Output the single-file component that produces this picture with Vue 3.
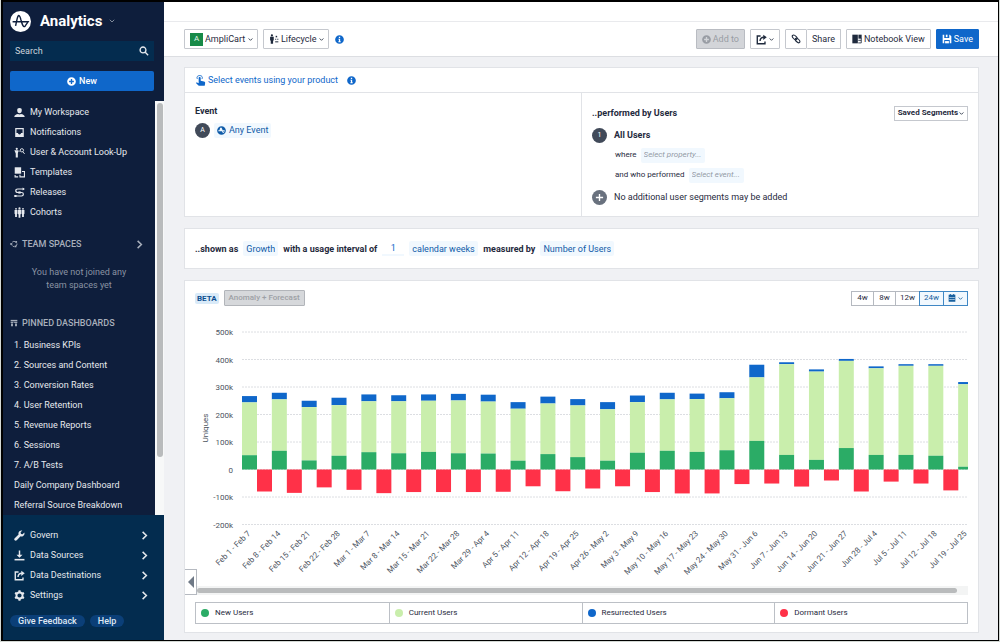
<script setup>
import { h } from 'vue'

const icons = {
  user: { f: ['M6 1a2.5 2.5 0 0 1 2.5 2.7C8.5 5.400 7.500 6.800 6 6.800S3.500 5.400 3.500 3.700A2.500 2.500 0 0 1 6 1z', 'M.3 11c0-2.400 2-2.900 4.100-3.400.9.6 2.300.6 3.200 0 2.100.5 4.100 1 4.100 3.400z'] },
  inbox: { s: ['M2 1.800h8v8.400H2z'], f: ['M2 6.600h2.300c.2 1 .8 1.500 1.700 1.500s1.500-.5 1.700-1.500H10V11H2z'], w: 1.3 },
  lookup: { f: ['M3 .8a1.200 1.200 0 1 1 0 2.400 1.200 1.200 0 0 1 0-2.400z', 'M.4 3.600h4.600L4.200 7.200v4.300H1.900V7.200z'], s: ['M5.300 5.200 6.500 3.900', 'M8.600 1.800a1.800 1.800 0 1 1 0 3.600 1.800 1.800 0 0 1 0-3.600z', 'M9.700 5.200l1.900 2.400'], w: 1 },
  templates: { f: ['M.8.300h7v7H.8z'], s: ['M8.700 4.900H11.400v5.900H6.500V8.400', 'M1.200 8.600v2.200h3.300'], w: 1.200 },
  releases: { s: ['M11 2.200H4.200C1.200 2.200 1.200 6 4.200 6h4c2.700 0 2.700 3.800 0 3.800H.6'], f: ['M9.400.6 11.800 2.200 9.400 3.800z', 'M4.700 4.800h2.600v2.400H4.700z', 'M.4 8.700h2.400v2.200H.4z'], w: 1.300 },
  cohorts: { f: ['M6 .3a1.200 1.200 0 1 1 0 2.400A1.200 1.200 0 0 1 6 .3z', 'M4.400 3h3.200v4.600l-.6.5v3.700H5V8.100l-.6-.5z', 'M2.200 1a1 1 0 1 1 0 2 1 1 0 0 1 0-2z', 'M.6 3.300h3.200v4l-.6.5V11h-2V7.800l-.6-.5z', 'M9.800 1a1 1 0 1 1 0 2 1 1 0 0 1 0-2z', 'M8.200 3.300h3.200v4l-.6.5V11h-2V7.800l-.6-.5z'] },
  team: { s: ['M3.300 3.300A4 4 0 0 1 8.500 2.800', 'M10.400 5.200a4 4 0 0 1-1.600 4', 'M6.800 10a4 4 0 0 1-3.800-2'], f: ['M.4 4.700h3v2.600h-3z', 'M8 1.600h2.600v2.600H8z', 'M7 8.300h2.600v2.600H7z'], w: 1.300 },
  board: { f: ['M1 1.300h10v2.200H1z', 'M1 4.300h4.200v1.600H1z', 'M6.200 4.300H11v1.600H6.200z', 'M1.600 6.800h2.800v3.900H1.600z', 'M7.600 6.800h2.800v3.900H7.600z'] },
  wrench: { f: ['M11.300 2.800 9.400 4.700 7.600 4.300 7.200 2.500 9.100.6C7.500.1 5.600.9 5 2.600c-.3.8-.2 1.500 0 2.200L.8 8.900c-.7.7-.7 1.600-.1 2.300.7.6 1.600.6 2.300-.1l4.200-4.200c.7.300 1.600.3 2.400-.1 1.500-.7 2.200-2.400 1.700-4z'] },
  download: { f: ['M5.200.5h1.600v4.600h2.500L6 8.500 2.700 5.100h2.500z', 'M.6 9.700h10.800v1.700H.6z'] },
  share: { s: ['M5 2.200H1.400v8.500h8.400V8.200', 'M4.400 7.600c.1-2.600 1.400-3.900 4.200-4'], f: ['M7.900.8 11.700 3.600 7.900 6.500z'], w: 1.500 },
  gear: { s: ['M6 2.700a3.300 3.300 0 1 1 0 6.600 3.300 3.300 0 0 1 0-6.600z'], f: ['M4.900.4h2.200l.3 2.200H4.600z', 'M4.900 11.600h2.200l.3-2.200H4.600z', 'M.6 4.100 1.700 2.200l2.100.9-1.400 2.300z', 'M11.400 4.100 10.300 2.200l-2.100.9 1.400 2.300z', 'M.6 7.900l1.100 1.900 2.100-.9-1.400-2.300z', 'M11.400 7.900l-1.100 1.900-2.100-.9 1.400-2.300z'], w: 2 },
  search: { s: ['M4.800 1.200a3.500 3.500 0 1 1 0 7 3.500 3.500 0 0 1 0-7z', 'M7.500 7.500 11 11'], w: 1.600 },
  down: { s: ['M1.500 3.500 6 8l4.500-4.500'], w: 2 },
  right: { s: ['M3.500 1.200 8.500 6l-5 4.800'], w: 2 },
  plus: { f: ['M6 .2a5.800 5.800 0 1 0 0 11.600A5.800 5.800 0 0 0 6 .2zM5.100 2.800h1.800v2.300h2.300v1.800H6.900v2.300H5.100V6.900H2.800V5.100h2.300z'] },
  info: { f: ['M6 .2a5.800 5.800 0 1 0 0 11.600A5.800 5.800 0 0 0 6 .2zM5.100 2.300h1.800v1.600H5.100zM4.500 4.900h2.400v3.400h.7v1.200H4.500V8.300h.7V6.100h-.7z'] },
  tap: { f: ['M4 3.200c0-1.500 2.200-1.500 2.200 0v3l3.600.8c1 .2 1.400.8 1.300 1.700l-.5 3.100H4.100L1 8.600c.6-.8 1.700-.6 3 .3z'], s: ['M2.700 4.400C1.300 2.100 3 .6 5.100.6s3.800 1.500 2.400 3.800'], w: 1 },
  lifecycle: { f: ['M3.500.4a1.300 1.300 0 1 1 0 2.600 1.300 1.300 0 0 1 0-2.600z', 'M1.300 3.400h4.400v4.100l-.8.5v3.800H2.100V8l-.8-.5z', 'M8 2.200h1.800V4H8z', 'M7.400 5.800h1.300V7H7.400z', 'M9.900 5.800h1.300V7H9.900z', 'M7.400 8.800h3.800V10H7.400z'] },
  link: { s: ['M1.800 1.800C3.200.5 4.700 1.500 6.300 3.100s1.300 2.700.4 3.500-2.200.4-3.700-1.200S.8 2.800 1.800 1.800z', 'M5.500 5.400c1-.9 2.200-.5 3.800 1.200s1.900 2.600 1 3.500-2.200.5-3.800-1.100-1.900-2.700-1-3.600z'], w: 1.300 },
  notebook: { f: ['M.4.800h6.600v10.400H.4z', 'M7.700.8h3.900v4.800H7.700z'], s: ['M7.500 10.700h3.600V5', 'M7.500 7.600h3.600'], w: 1 },
  save: { f: ['M.8.800h1.900v4h6V.8h.6l1.900 1.900v8.500H9.300V7.300H2.700v3.900H.8z', 'M4.600.8h2v3h-2z', 'M3.700 8.500h4.600v2.700H3.700z'] },
  calendar: { f: ['M2.700 0h1.500v1.200h3.600V0h1.500v1.200H11V11.600H1V1.200h1.700zM2.300 4.500v1.600h1.600V4.500zM5.200 4.500v1.600h1.600V4.500zM8.100 4.500v1.600h1.600V4.500zM2.300 7.500v1.600h1.600V7.500zM5.200 7.500v1.600h1.600V7.500zM8.100 7.500v1.600h1.600V7.500z'] },
  event: { f: ['M6 .2a5.800 5.800 0 1 0 0 11.600A5.800 5.800 0 0 0 6 .2zM1.800 6.900V5.700h1.500c.6-2.700 1.200-3.600 2-3.600 1 0 1.500 1.300 2.100 3.600h2.800v1.200H7.700c.5 1.800.9 1.800 1.400.2l1 .3c-.9 2.700-2.400 2.600-3.500-.5z'] },
  logo: { s: ['M1 6.200h9.800L9 8.800C7.700 10.300 7 7.500 6.300 5 5.500 1.700 4.600 1.200 3.900 4.200L2.900 8.800'], w: .9 }
}

const Icon = (props) => {
  const i = icons[props.name]
  return h('svg', { viewBox: '0 0 12 12', width: props.size, height: props.size, 'aria-hidden': 'true' }, [
    ...(i.f || []).map((d) => h('path', { d, fill: 'currentColor', 'fill-rule': 'evenodd' })),
    ...(i.s || []).map((d) => h('path', { d, fill: 'none', stroke: 'currentColor', 'stroke-width': i.w }))
  ])
}
Icon.props = ['name', 'size']

const nav = [
  ['user', 'My Workspace'], ['inbox', 'Notifications'], ['lookup', 'User & Account Look-Up'],
  ['templates', 'Templates'], ['releases', 'Releases'], ['cohorts', 'Cohorts']
]
const boards = [
  '1. Business KPIs', '2. Sources and Content', '3. Conversion Rates', '4. User Retention',
  '5. Revenue Reports', '6. Sessions', '7. A/B Tests', 'Daily Company Dashboard', 'Referral Source Breakdown'
]
const admin = [['wrench', 'Govern'], ['download', 'Data Sources'], ['share', 'Data Destinations'], ['gear', 'Settings']]
const ranges = ['4w', '8w', '12w', '24w']
const legend = [['New Users', 'new-users'], ['Current Users', 'current'], ['Resurrected Users', 'resurrected'], ['Dormant Users', 'dormant']]

// label, top of new, top of current, top of resurrected, dormant (thousands)
const weeks = [
  ['Feb 1 - Feb 7', 52, 244, 267, 80], ['Feb 8 - Feb 14', 68, 255, 279, 85], ['Feb 15 - Feb 21', 33, 227, 250, 65],
  ['Feb 22 - Feb 28', 50, 234, 261, 74], ['Mar 1 - Mar 7', 63, 248, 273, 86], ['Mar 8 - Mar 14', 59, 248, 270, 82],
  ['Mar 15 - Mar 21', 64, 250, 273, 82], ['Mar 22 - Mar 28', 59, 251, 275, 82], ['Mar 29 - Apr 4', 58, 247, 272, 81],
  ['Apr 5 - Apr 11', 32, 221, 245, 61], ['Apr 12 - Apr 18', 56, 240, 265, 79], ['Apr 19 - Apr 25', 45, 233, 256, 69],
  ['Apr 26 - May 2', 32, 219, 245, 61], ['May 3 - May 9', 61, 245, 269, 82], ['May 10 - May 16', 68, 255, 279, 87],
  ['May 17 - May 23', 64, 256, 276, 87], ['May 24 - May 30', 70, 259, 281, 53], ['May 31 - Jun 6', 104, 335, 381, 51],
  ['Jun 7 - Jun 13', 53, 383, 390, 62], ['Jun 14 - Jun 20', 35, 356, 364, 40], ['Jun 21 - Jun 27', 78, 395, 402, 80],
  ['Jun 28 - Jul 4', 53, 368, 375, 44], ['Jul 5 - Jul 11', 53, 377, 383, 51], ['Jul 12 - Jul 18', 50, 377, 383, 76],
  ['Jul 19 - Jul 25', 10, 310, 318, 0]
]
const ticks = [500, 400, 300, 200, 100, 0, -100, -200]
const unit = 0.275
const zero = 149.5
const y = (v) => zero - v * unit
const bars = weeks.map(([label, n, c, r, d], i) => {
  const x = 47 + i * 29.84
  return { label, x, w: Math.min(15, 773 - x), n, c, r, d }
})
</script>

<template>
  <div class="frame">
    <aside class="side">
      <header class="brand">
        <span class="logo"><Icon name="logo" size="19" /></span>
        <strong>Analytics</strong>
        <Icon name="down" size="6" class="muted" />
      </header>
      <label class="search">
        <input type="text" placeholder="Search" aria-label="Search" />
        <Icon name="search" size="10" />
      </label>
      <button class="new"><Icon name="plus" size="9" />New</button>

      <div class="scroll">
        <div class="scroll-body">
          <nav class="links">
            <a v-for="[icon, text] in nav" :key="text" href="#"><Icon :name="icon" size="11" />{{ text }}</a>
          </nav>
          <h2 class="head team"><Icon name="team" size="8" />TEAM SPACES<Icon name="right" size="9" class="end" /></h2>
          <p class="empty">You have not joined any<br />team spaces yet</p>
          <h2 class="head"><Icon name="board" size="8" />PINNED DASHBOARDS</h2>
          <nav class="boards">
            <a v-for="b in boards" :key="b" href="#">{{ b }}</a>
          </nav>
        </div>
        <div class="rail"><div class="thumb"></div></div>
      </div>

      <footer class="admin">
        <nav class="links">
          <a v-for="[icon, text] in admin" :key="text" href="#">
            <Icon :name="icon" size="11" />{{ text }}<Icon name="right" size="9" class="end" />
          </a>
        </nav>
        <div class="pills"><button>Give Feedback</button><button>Help</button></div>
      </footer>
    </aside>

    <main class="main">
      <div class="strip"></div>
      <div class="toolbar">
        <label class="btn drop"><span class="tile">A</span>
          <select aria-label="Project"><option>AmpliCart</option></select><Icon name="down" size="5" />
        </label>
        <label class="btn drop"><Icon name="lifecycle" size="10" />
          <select aria-label="Chart type"><option>Lifecycle</option></select><Icon name="down" size="5" />
        </label>
        <Icon name="info" size="9" class="blue info" />
        <span class="space"></span>
        <button class="btn off" disabled><Icon name="plus" size="9" />Add to</button>
        <button class="btn" aria-label="Export"><Icon name="share" size="11" /><Icon name="down" size="5" /></button>
        <div class="pair">
          <button class="btn" aria-label="Copy link"><Icon name="link" size="10" /></button>
          <button class="btn">Share</button>
        </div>
        <button class="btn"><Icon name="notebook" size="10" />Notebook View</button>
        <button class="btn save"><Icon name="save" size="10" />Save</button>
      </div>

      <div class="content">
        <section class="card">
          <div class="pick">
            <a href="#"><Icon name="tap" size="11" />Select events using your product</a>
            <Icon name="info" size="9" class="blue" />
          </div>
          <div class="cols">
            <div class="col">
              <h3>Event</h3>
              <div class="line">
                <span class="dot">A</span>
                <button class="chip"><Icon name="event" size="9" />Any Event</button>
              </div>
            </div>
            <div class="col right">
              <div class="line by">
                <h3>..performed by Users</h3>
                <button class="saved">Saved Segments<Icon name="down" size="5" /></button>
              </div>
              <div class="line all"><span class="dot">1</span><b>All Users</b></div>
              <div class="line sub">where <select class="chip hint" aria-label="Property"><option>Select property...</option></select></div>
              <div class="line sub">and who performed <select class="chip hint" aria-label="Event"><option>Select event...</option></select></div>
              <div class="line more">
                <span class="dot grey"><svg viewBox="0 0 10 10" width="9" height="9"><path d="M5 1v8M1 5h8" stroke="#fff" stroke-width="1.500" /></svg></span>
                No additional user segments may be added
              </div>
            </div>
          </div>
        </section>

        <section class="card measure">
          <b>..shown as</b>
          <select class="chip" aria-label="Shown as"><option>Growth</option></select>
          <b>with a usage interval of</b>
          <input class="count" value="1" aria-label="Interval" />
          <select class="chip" aria-label="Interval unit"><option>calendar weeks</option></select>
          <b>measured by</b>
          <select class="chip" aria-label="Measured by"><option>Number of Users</option></select>
        </section>

        <section class="card chart">
          <div class="line">
            <span class="beta">BETA</span>
            <button class="anomaly" disabled>Anomaly + Forecast</button>
            <span class="space"></span>
            <div class="ranges">
              <button v-for="r in ranges" :key="r" :class="{ on: r === '24w' }">{{ r }}</button>
              <button class="on" aria-label="Pick dates"><Icon name="calendar" size="8" /><Icon name="down" size="5" /></button>
            </div>
          </div>
          <svg class="plot" viewBox="0 0 773 266" role="img" aria-label="Uniques per week">
            <g v-for="t in ticks" :key="t">
              <line x1="47" x2="773" :y1="y(t)" :y2="y(t)" class="grid" />
              <text x="38" :y="y(t) + 3" text-anchor="end">{{ t ? t + 'k' : '0' }}</text>
            </g>
            <text transform="translate(13 108) rotate(-90)" text-anchor="middle">Uniques</text>
            <g v-for="b in bars" :key="b.label">
              <rect class="resurrected" :x="b.x" :y="y(b.r)" :width="b.w" :height="(b.r - b.c) * unit" />
              <rect class="current" :x="b.x" :y="y(b.c)" :width="b.w" :height="(b.c - b.n) * unit" />
              <rect class="new-users" :x="b.x" :y="y(b.n)" :width="b.w" :height="b.n * unit" />
              <rect v-if="b.d" class="dormant" :x="b.x + 15" :y="zero" width="15" :height="b.d * unit" />
              <text :transform="`translate(${b.x + 9} 214) rotate(-45)`" text-anchor="end">{{ b.label }}</text>
            </g>
          </svg>
          <div class="hbar"><div></div></div>
          <ul class="legend">
            <li v-for="[text, kind] in legend" :key="kind"><i :class="kind"></i>{{ text }}</li>
          </ul>
          <button class="fold" aria-label="Collapse"><svg viewBox="0 0 6 12" width="6" height="12"><path d="M6 0v12L0 6z" fill="#6f7986" /></svg></button>
        </section>
      </div>
    </main>
  </div>
</template>

<style>
body { background: #d3d8d4; }
</style>

<style scoped>
* { box-sizing: border-box; }
.frame {
  display: flex; min-height: calc(100vh - 1px); margin: 0 1px; border: 1px solid #000; border-top-width: 2px; border-left-width: 2px;
  background: #f0f1f4; color: #1f2a3d; font: 400 9px/12px Roboto, "Liberation Sans", sans-serif;
}
button, select, input { font: inherit; color: inherit; margin: 0; padding: 0; border: 0; background: none; border-radius: 0; }
select { appearance: none; }
a { color: inherit; text-decoration: none; }
svg { flex: none; display: block; }
h2, h3, p, ul { margin: 0; padding: 0; font-size: 9px; }
.blue { color: #0f67ca; }
.space { flex: 1; }
.line { display: flex; align-items: center; }

.side { flex: none; width: 161px; display: flex; flex-direction: column; background: #0e1e3c; color: #e6e9ee; }
.brand { display: flex; align-items: center; height: 38px; padding-left: 7px; }
.brand strong { margin: 0 7px 0 9px; font: 700 15px/20px Roboto, sans-serif; color: #fff; }
.logo { display: grid; place-items: center; width: 21px; height: 21px; border-radius: 50%; background: #fff; color: #0e1e3c; }
.muted { color: #7f8999; }
.search { display: flex; align-items: center; height: 20px; margin: 1px 10px 0 7px; padding: 0 5px; background: #042c4f; }
.search input { flex: 1; min-width: 0; outline: 0; }
.search input::placeholder { color: #cdd4dc; opacity: 1; }
.new { display: flex; align-items: center; justify-content: center; gap: 3px; height: 20px; margin: 10px 10px 10px 7px; border-radius: 2px; background: #0f67ca; color: #fff; font-weight: 500; }
.scroll { flex: 1; display: flex; }
.scroll-body { flex: 1; }
.rail { width: 9px; padding: 2px 1px 0 2px; background: #f7f8f8; }
.thumb { width: 6px; height: 86%; border-radius: 3px; background: #b9bbbc; }
.links a, .boards a { display: flex; align-items: center; height: 20px; padding-left: 11px; }
.links a { gap: 5px; }
.links { padding-top: 1px; }
.end { margin-left: auto; }
.head { display: flex; align-items: center; gap: 4px; height: 20px; padding-left: 7px; font-weight: 500; color: #a8afbb; }
.team { margin-top: 12px; padding-right: 11px; }
.empty { margin: 12px 0 21px; text-align: center; line-height: 13px; color: #8a93a3; }
.boards { padding-top: 2px; }
.admin { padding: 9px 15px 13px 0; background: #032c4f; }
.pills { display: flex; gap: 5px; padding: 10px 0 0 7px; }
.pills button { height: 12px; padding: 0 8px; border-radius: 6px; background: #0b3f78; line-height: 12px; color: #dfe8f3; font-weight: 500; }

.main { flex: 1; min-width: 0; display: flex; flex-direction: column; }
.strip { height: 20px; background: #fff; border-bottom: 1px solid #e9eaed; }
.toolbar { display: flex; align-items: center; gap: 5px; height: 35px; padding: 0 19px 0 20px; background: #fff; border-bottom: 1px solid #dcdee2; }
.btn { display: flex; align-items: center; justify-content: center; gap: 2px; height: 20px; padding: 0 5px; border: 1px solid #c5c8ce; border-radius: 1px; background: #fff; }
.drop { padding: 0 4px 0 5px; }
.tile { display: grid; place-items: center; width: 13px; height: 13px; background: #178a48; color: #e3f4ea; font-size: 8px; }
.info { margin-left: 1px; }
.off { background: #d3d5d9; border-color: #b9bcc2; color: #999da4; }
.pair { display: flex; }
.pair .btn + .btn { border-left: 0; }
.save { background: #0f67ca; border-color: #0f67ca; color: #fff; }

.content { flex: 1; display: flex; flex-direction: column; gap: 11px; padding: 10px 19px 7px 20px; }
.card { border: 1px solid #e1e3e7; background: #fff; }
.pick { display: flex; align-items: center; gap: 9px; height: 25px; padding: 0 10px; border-bottom: 1px solid #e1e3e7; color: #0f67ca; }
.pick a { display: flex; align-items: center; gap: 2px; }
.cols { display: flex; min-height: 123px; }
.col { flex: 1; padding: 12px 10px; }
.col h3 { font-weight: 700; }
.col .line { height: 20px; }
.col > h3 { margin-bottom: 3px; }
.right { border-left: 1px solid #e1e3e7; padding-bottom: 0; }
.dot { display: grid; place-items: center; width: 15px; height: 15px; margin-right: 4px; border-radius: 50%; background: #414a59; color: #fff; font-size: 7px; }
.grey { background: #69717e; }
.chip { display: inline-flex; align-items: center; gap: 3px; height: 15px; padding: 0 3px; border-radius: 2px; background: #f1f8fe; color: #0f5ba8; }
.col .by { justify-content: space-between; height: 16px; margin-bottom: 4px; }
.saved { display: flex; align-items: center; gap: 1px; height: 15px; padding: 0 3px; border: 1px solid #c5c8ce; font-size: 8px; font-weight: 700; }
.right .dot { margin-right: 7px; }
.col .line.sub { gap: 4px; padding-left: 23px; font-size: 8px; }
.hint { color: #949ba6; font-style: italic; }
.col .line.more { height: 24px; }
.measure { display: flex; align-items: center; gap: 5px; height: 41px; padding: 0 10px; flex: none; }
.count { width: 22px; height: 15px; text-align: center; color: #0f67ca; border-bottom: 2px solid #f1f8fe; }

.chart { position: relative; flex: 1; padding: 9px 10px 8px; }
.beta { padding: 0 2px; margin-right: 5px; line-height: 11px; border-radius: 2px; background: #d9eaf8; color: #0d4f8f; font-weight: 700; font-size: 8px; }
.anomaly { height: 16px; padding: 0 4px; border: 1px solid #b2b5ba; border-radius: 1px; background: #d6d8db; color: #9da0a5; font-size: 8px; font-weight: 500; }
.ranges { display: flex; }
.ranges button { display: flex; align-items: center; justify-content: center; gap: 2px; height: 15px; min-width: 23px; padding: 0 4px; border: 1px solid #b5b9c0; font-size: 8px; }
.ranges button + button { margin-left: -1px; }
.ranges .on { position: relative; border-color: #3f87c4; background: #f1f8fe; color: #17609f; }
.plot { width: 100%; margin-top: 14px; overflow: visible; }
.plot text { font-size: 8px; fill: #4c5461; }
.grid { stroke: #dcdee2; stroke-width: 1; stroke-dasharray: 2 1; }
.new-users { fill: #2bac66; background: #2bac66; }
.current { fill: #c9eeac; background: #c9eeac; }
.resurrected { fill: #0f67ca; background: #0f67ca; }
.dormant { fill: #ff3148; background: #ff3148; }
.hbar { height: 9px; padding: 2px 11px 1px 2px; background: #f3f4f4; }
.hbar div { height: 5px; border-radius: 3px; background: #b9bbbc; }
.legend { display: grid; grid-template-columns: repeat(4, 1fr); height: 22px; margin-top: 7px; border: 1px solid #bcc0c6; list-style: none; }
.legend li { display: flex; align-items: center; gap: 6px; padding-left: 5px; font-size: 8px; }
.legend li + li { border-left: 1px solid #bcc0c6; }
.legend i { width: 8px; height: 8px; border-radius: 50%; }
.fold { position: absolute; left: 0; bottom: 37px; display: grid; place-items: center; width: 12px; height: 26px; border: 1px solid #b5b9c0; border-left: 0; background: #fff; }
</style>
